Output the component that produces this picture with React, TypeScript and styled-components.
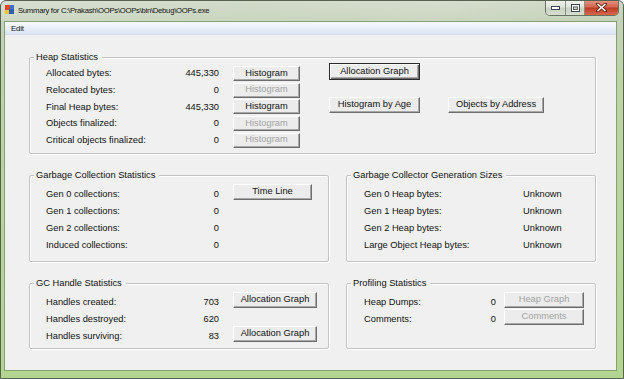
import React from 'react';
import styled, { createGlobalStyle, css } from 'styled-components';

const GlobalStyle = createGlobalStyle`
  html, body {
    margin: 0;
    padding: 0;
    width: 624px;
    height: 379px;
    overflow: hidden;
    background: #ffffff;
  }
  body {
    font-family: "Liberation Sans", Arial, sans-serif;
  }
`;

const Window = styled.div`
  width: 624px;
  height: 379px;
  box-sizing: border-box;
  display: flex;
  flex-direction: column;
  border: 1px solid #56624f;
  border-radius: 6px 6px 0 0;
  background: linear-gradient(180deg, #d2dacb 0%, #c6d2bb 5%, #bcd4a4 20%, #b2d690 100%);
  overflow: hidden;
`;

const TitleBar = styled.div`
  height: 20px;
  flex: none;
  display: flex;
  align-items: flex-start;
  padding-left: 4px;
  background: linear-gradient(90deg, rgba(255,255,255,0.15) 0%, rgba(210,222,200,0.3) 40%, rgba(255,255,255,0.1) 70%, rgba(190,210,170,0.2) 100%);
`;

const AppIcon = styled.svg`
  margin-top: 4px;
  flex: none;
`;

const TitleText = styled.div`
  margin-left: 4px;
  line-height: 20px;
  font-size: 7.7px;
  letter-spacing: -0.27px;
  color: #111111;
  white-space: nowrap;
`;

const CaptionGroup = styled.div`
  margin-left: auto;
  margin-right: 4px;
  margin-top: -1px;
  display: flex;
  border: 1px solid rgba(70, 80, 68, 0.75);
  border-top: none;
  border-radius: 0 0 5px 5px;
  overflow: hidden;
  height: 15px;
`;

const CaptionButton = styled.div<{ $w: number; $close?: boolean }>`
  width: ${p => p.$w}px;
  height: 15px;
  display: flex;
  align-items: center;
  justify-content: center;
  box-sizing: border-box;
  ${p => p.$close
    ? css`
        background: linear-gradient(180deg, #e49a88 0%, #d46650 45%, #c13c25 55%, #d6674f 100%);
      `
    : css`
        background: linear-gradient(180deg, #f2f4ef 0%, #dfe5da 45%, #c9d2c2 55%, #d6decf 100%);
        border-right: 1px solid rgba(80, 90, 78, 0.6);
      `}
`;

const ClientFrame = styled.div`
  flex: 1;
  margin: 0 6px 7px 3px;
  border: 1px solid #86a076;
  background: #f0f0f0;
  display: flex;
  flex-direction: column;
  min-height: 0;
`;

const MenuBar = styled.div`
  height: 12px;
  flex: none;
  display: flex;
  align-items: center;
  padding-left: 6px;
  background: linear-gradient(180deg, #f7f9fd 0%, #e9eef8 50%, #dbe3f3 100%);
  border-bottom: 1px solid #d4dcec;
`;

const MenuItem = styled.span`
  font-size: 7.8px;
  letter-spacing: -0.2px;
  color: #111111;
`;

const Content = styled.div`
  padding: 22px 0 0 24px;
  display: grid;
  grid-template-columns: 300px 250px;
  grid-template-rows: 97px 87px 66px;
  column-gap: 17px;
  row-gap: 21px;
`;

const GroupBox = styled.div<{ $span?: boolean }>`
  position: relative;
  box-sizing: border-box;
  border: 1px solid #c3c3c3;
  box-shadow: inset 1px 1px 0 #ffffff, 1px 1px 0 #ffffff;
  border-radius: 2px;
  ${p => p.$span && css`grid-column: 1 / span 2;`}
`;

const Legend = styled.div`
  position: absolute;
  top: -7px;
  left: 4px;
  padding: 0 4px 0 2px;
  line-height: 12px;
  font-size: 9.3px;
  color: #111111;
  background: #f0f0f0;
  white-space: nowrap;
`;

const GroupBody = styled.div<{ $pl: number }>`
  display: flex;
  align-items: flex-start;
  padding-left: ${p => p.$pl}px;
`;

const StatList = styled.div<{ $w: number; $pt: number; $pitch: number }>`
  width: ${p => p.$w}px;
  padding-top: ${p => p.$pt}px;
  display: grid;
  grid-auto-rows: ${p => p.$pitch}px;
  flex: none;
`;

const StatRow = styled.div<{ $cols: string }>`
  display: grid;
  grid-template-columns: ${p => p.$cols};
  align-items: center;
  font-size: 9.3px;
  color: #111111;
  white-space: nowrap;
`;

const Value = styled.span<{ $left?: boolean }>`
  text-align: ${p => (p.$left ? 'left' : 'right')};
`;

const ButtonColumn = styled.div<{ $ml: number; $pt: number; $pitch: number; $cols?: string; $gap?: number }>`
  margin-left: ${p => p.$ml}px;
  padding-top: ${p => p.$pt}px;
  display: grid;
  grid-template-columns: ${p => p.$cols || 'auto'};
  column-gap: ${p => p.$gap || 0}px;
  grid-auto-rows: ${p => p.$pitch}px;
  align-items: center;
  flex: none;
`;

const Button = styled.button<{ $w: number; $h?: number; $default?: boolean; $row?: number; $col?: number }>`
  width: ${p => p.$w}px;
  height: ${p => p.$h || 15}px;
  box-sizing: border-box;
  padding: 0;
  margin: 0;
  font-family: "Liberation Sans", Arial, sans-serif;
  font-size: 9.3px;
  line-height: 1;
  color: #111111;
  background: #ececec;
  border: 1px solid;
  border-color: #ffffff #6d6d6d #6d6d6d #ffffff;
  box-shadow: inset -1px -1px 0 #a8a8a8;
  border-radius: 0;
  grid-row: ${p => p.$row || 'auto'};
  grid-column: ${p => p.$col || 'auto'};
  &:disabled {
    color: #a3a3a3;
  }
  ${p => p.$default && css`
    border-color: #2a2a2a;
    box-shadow: inset 1px 1px 0 #ffffff, inset -1px -1px 0 #6d6d6d, inset -2px -2px 0 #a8a8a8;
  `}
`;

const heapRows = [
  { label: 'Allocated bytes:', value: '445,330', enabled: true },
  { label: 'Relocated bytes:', value: '0', enabled: false },
  { label: 'Final Heap bytes:', value: '445,330', enabled: true },
  { label: 'Objects finalized:', value: '0', enabled: false },
  { label: 'Critical objects finalized:', value: '0', enabled: false },
];

const gcRows = [
  { label: 'Gen 0 collections:', value: '0' },
  { label: 'Gen 1 collections:', value: '0' },
  { label: 'Gen 2 collections:', value: '0' },
  { label: 'Induced collections:', value: '0' },
];

const genRows = [
  { label: 'Gen 0 Heap bytes:', value: 'Unknown' },
  { label: 'Gen 1 Heap bytes:', value: 'Unknown' },
  { label: 'Gen 2 Heap bytes:', value: 'Unknown' },
  { label: 'Large Object Heap bytes:', value: 'Unknown' },
];

const handleRows = [
  { label: 'Handles created:', value: '703' },
  { label: 'Handles destroyed:', value: '620' },
  { label: 'Handles surviving:', value: '83' },
];

const profilingRows = [
  { label: 'Heap Dumps:', value: '0' },
  { label: 'Comments:', value: '0' },
];

const App: React.FC = () => {
  return (
    <>
      <GlobalStyle />
      <Window>
        <TitleBar>
          <AppIcon width="9" height="9" viewBox="0 0 9 9">
            <rect x="0" y="0" width="5" height="5" fill="#e0482a" />
            <rect x="5" y="0" width="4" height="4" fill="#3d74c8" />
            <rect x="0" y="5" width="4" height="4" fill="#f2c230" />
            <rect x="4" y="4" width="5" height="5" fill="#2f5fb0" />
          </AppIcon>
          <TitleText>Summary for C:\Prakash\OOPs\OOPs\bin\Debug\OOPs.exe</TitleText>
          <CaptionGroup>
            <CaptionButton $w={20}>
              <svg width="9" height="4" viewBox="0 0 9 4">
                <rect x="0.5" y="0.5" width="8" height="3" fill="#ffffff" stroke="#3c4650" strokeWidth="1" />
              </svg>
            </CaptionButton>
            <CaptionButton $w={19}>
              <svg width="9" height="8" viewBox="0 0 9 8">
                <rect x="0.5" y="0.5" width="8" height="7" fill="none" stroke="#3c4650" strokeWidth="1" />
                <rect x="1.5" y="1.5" width="6" height="5" fill="none" stroke="#ffffff" strokeWidth="1" />
                <rect x="2.5" y="3" width="4" height="2.5" fill="none" stroke="#3c4650" strokeWidth="0.8" />
              </svg>
            </CaptionButton>
            <CaptionButton $w={33} $close>
              <svg width="11" height="9" viewBox="0 0 11 9">
                <path d="M1.5 1 L9.5 8 M9.5 1 L1.5 8" stroke="#5a2418" strokeWidth="3" strokeLinecap="square" />
                <path d="M1.5 1 L9.5 8 M9.5 1 L1.5 8" stroke="#ffffff" strokeWidth="1.6" />
              </svg>
            </CaptionButton>
          </CaptionGroup>
        </TitleBar>
        <ClientFrame>
          <MenuBar>
            <MenuItem>Edit</MenuItem>
          </MenuBar>
          <Content>
            <GroupBox $span>
              <Legend>Heap Statistics</Legend>
              <GroupBody $pl={16}>
                <StatList $w={173} $pt={7} $pitch={16.7}>
                  {heapRows.map((r, i) => (
                    <StatRow key={i} $cols="1fr auto">
                      <span>{r.label}</span>
                      <Value>{r.value}</Value>
                    </StatRow>
                  ))}
                </StatList>
                <ButtonColumn $ml={14} $pt={7} $pitch={16.7}>
                  {heapRows.map((r, i) => (
                    <Button key={i} $w={67} disabled={!r.enabled}>Histogram</Button>
                  ))}
                </ButtonColumn>
                <ButtonColumn $ml={29} $pt={5} $pitch={16.7} $cols="91px 96px" $gap={28}>
                  <Button $w={91} $h={17} $default $row={1} $col={1}>Allocation Graph</Button>
                  <Button $w={91} $h={16} $row={3} $col={1}>Histogram by Age</Button>
                  <Button $w={96} $h={16} $row={3} $col={2}>Objects by Address</Button>
                </ButtonColumn>
              </GroupBody>
            </GroupBox>

            <GroupBox>
              <Legend>Garbage Collection Statistics</Legend>
              <GroupBody $pl={16}>
                <StatList $w={173} $pt={9.5} $pitch={17}>
                  {gcRows.map((r, i) => (
                    <StatRow key={i} $cols="1fr auto">
                      <span>{r.label}</span>
                      <Value>{r.value}</Value>
                    </StatRow>
                  ))}
                </StatList>
                <ButtonColumn $ml={14} $pt={7} $pitch={17}>
                  <Button $w={79} $h={16}>Time Line</Button>
                </ButtonColumn>
              </GroupBody>
            </GroupBox>

            <GroupBox>
              <Legend>Garbage Collector Generation Sizes</Legend>
              <GroupBody $pl={17}>
                <StatList $w={220} $pt={9.5} $pitch={17}>
                  {genRows.map((r, i) => (
                    <StatRow key={i} $cols="159px auto">
                      <span>{r.label}</span>
                      <Value $left>{r.value}</Value>
                    </StatRow>
                  ))}
                </StatList>
              </GroupBody>
            </GroupBox>

            <GroupBox>
              <Legend>GC Handle Statistics</Legend>
              <GroupBody $pl={16}>
                <StatList $w={173} $pt={9.5} $pitch={17}>
                  {handleRows.map((r, i) => (
                    <StatRow key={i} $cols="1fr auto">
                      <span>{r.label}</span>
                      <Value>{r.value}</Value>
                    </StatRow>
                  ))}
                </StatList>
                <ButtonColumn $ml={14} $pt={7} $pitch={17}>
                  <Button $w={84} $h={16} $row={1}>Allocation Graph</Button>
                  <Button $w={84} $h={16} $row={3}>Allocation Graph</Button>
                </ButtonColumn>
              </GroupBody>
            </GroupBox>

            <GroupBox>
              <Legend>Profiling Statistics</Legend>
              <GroupBody $pl={17}>
                <StatList $w={132} $pt={9.5} $pitch={17}>
                  {profilingRows.map((r, i) => (
                    <StatRow key={i} $cols="1fr auto">
                      <span>{r.label}</span>
                      <Value>{r.value}</Value>
                    </StatRow>
                  ))}
                </StatList>
                <ButtonColumn $ml={8} $pt={7} $pitch={17}>
                  <Button $w={80} $h={16} disabled>Heap Graph</Button>
                  <Button $w={80} $h={16} disabled>Comments</Button>
                </ButtonColumn>
              </GroupBody>
            </GroupBox>
          </Content>
        </ClientFrame>
      </Window>
    </>
  );
};

export default App;
